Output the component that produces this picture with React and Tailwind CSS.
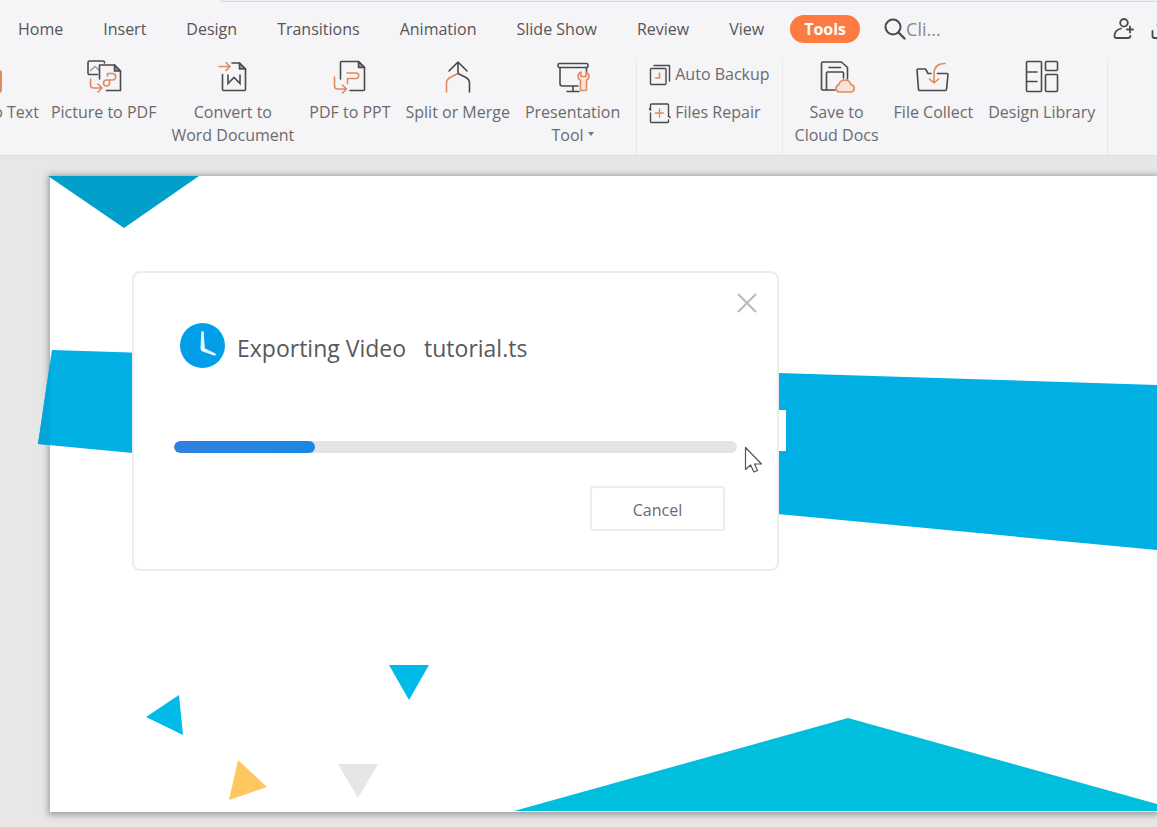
import { useState } from 'react'

const TABS = ['Home', 'Insert', 'Design', 'Transitions', 'Animation', 'Slide Show', 'Review', 'View', 'Tools']

const DARK = '#4a4a4c'
const ORANGE = '#e08a5f'

function Icon({ children, size = 36, className = '' }) {
  return (
    <svg
      width={size}
      height={size}
      viewBox={`0 0 ${size} ${size}`}
      fill="none"
      stroke={DARK}
      strokeWidth="1.6"
      strokeLinecap="round"
      strokeLinejoin="round"
      className={`shrink-0 ${className}`}
      aria-hidden="true"
    >
      {children}
    </svg>
  )
}

const PictureToTextIcon = () => (
  <Icon>
    <path d="M22 4h-17v27h10" />
    <rect x="16" y="12" width="18" height="21" rx="2" stroke={ORANGE} strokeWidth="2" />
  </Icon>
)

const PictureToPdfIcon = () => (
  <Icon>
    <path d="M11.500 15.500H3.500a1.500 1.500 0 0 1-1.500-1.500V3.500A1.500 1.500 0 0 1 3.500 2H17a1.500 1.500 0 0 1 1.500 1.500V4" />
    <path d="M4.500 11.500l4.500-4 4.500 4" stroke="#9a9a9c" />
    <path d="M13.500 20V6h15l6 6v19.500H20.500" />
    <path d="M28.500 6v6h6z" fill="#9a9a9c" />
    <path d="M4.500 20v6a3 3 0 0 0 3 3h8M12 25l4 4-4 4" stroke={ORANGE} />
    <path d="M21.500 17v-2.500h5a3 3 0 0 1 0 6.500h-6a3 3 0 1 0 3 3v-3" stroke={ORANGE} />
  </Icon>
)

const ConvertWordIcon = () => (
  <Icon>
    <path d="M7.500 15.500v15a1 1 0 0 0 1 1h21a1 1 0 0 0 1-1V10l-6-6H17" />
    <path d="M24.500 4v6h6z" fill="#9a9a9c" />
    <path d="M13 16v8.500l6-6 6 6V16" strokeLinejoin="miter" />
    <path d="M4 7.500h11M11 3.500l4 4-4 4" stroke={ORANGE} />
  </Icon>
)

const PdfToPptIcon = () => (
  <Icon>
    <path d="M8.500 20V3.500a1 1 0 0 1 1-1h17l6 6v22a1 1 0 0 1-1 1H18" />
    <path d="M26.500 2.500v6h6z" fill="#9a9a9c" />
    <path d="M2.500 18v9a3 3 0 0 0 3 3h8M10.500 26l4 4-4 4" stroke={ORANGE} />
    <path d="M15 14h10a3 3 0 0 1 0 5.500h-9.500v5" stroke={ORANGE} />
  </Icon>
)

const SplitIcon = () => (
  <Icon>
    <path d="M18 14.500V3M9 12l9-9 9 9" />
    <path d="M18 14.500l-7.500 3.700C7.800 19.500 6.500 21 6.500 24v9" stroke={ORANGE} />
    <path d="M18 14.500l7.500 3.700c2.700 1.300 4 2.800 4 5.800v9" />
  </Icon>
)

const PresentationIcon = () => (
  <Icon>
    <rect x="3" y="4.500" width="30" height="4" rx="1.500" />
    <path d="M5 8.500v16a2.500 2.500 0 0 0 2.500 2.500H23M31.500 8.500V13M18 27v5.500M12 32.500h12" />
    <path
      d="M26 13v4.500h5V13c2 1 3 2.500 3 4.500 0 1.800-1 3-2.500 4v9a1 1 0 0 1-1 1h-4a1 1 0 0 1-1-1v-9c-1.500-1-2.500-2.200-2.500-4 0-2 1-3.500 3-4.500z"
      fill="#fbe6db"
      stroke={ORANGE}
    />
  </Icon>
)

const BackupIcon = () => (
  <Icon size={22}>
    <path d="M5 1.500h15.500V17" strokeWidth="1.400" />
    <rect x="1.500" y="4.500" width="15.500" height="16" rx="1" strokeWidth="1.400" />
    <path d="M10.500 9v5h-4" stroke={ORANGE} />
  </Icon>
)

const RepairIcon = () => (
  <Icon size={22}>
    <path
      d="M1.500 7.500V3a1 1 0 0 1 1-1h16a1 1 0 0 1 1 1v11M1.500 11v8.500a1 1 0 0 0 1 1h16a1 1 0 0 0 1-1V18"
      strokeWidth="1.400"
    />
    <path d="M0 6.500l1.500 1.500M19.500 14l1.500 1.500" />
    <path d="M10.500 7v8M6.500 11h8" stroke={ORANGE} strokeWidth="1.400" />
  </Icon>
)

const SaveCloudIcon = () => (
  <Icon>
    <path d="M16 31H4a1.500 1.500 0 0 1-1.500-1.500v-25A1.500 1.500 0 0 1 4 3h18.500l6 5.500V20" />
    <path d="M7.500 31V14a1 1 0 0 1 1-1h15a1 1 0 0 1 1 1v5M10 8.500h11.500" />
    <path
      d="M20.500 33a3.700 3.700 0 0 1-.6-7.300 6.200 6.200 0 0 1 12-.2 3.800 3.800 0 0 1 .3 7.500z"
      fill="#f9e3d8"
      stroke={ORANGE}
    />
  </Icon>
)

const FileCollectIcon = () => (
  <Icon>
    <path d="M16 14.500h-3L10.500 10H3a1 1 0 0 0-1 1.100l1.500 19.300a1.200 1.200 0 0 0 1.200 1.100h25.600a1.200 1.200 0 0 0 1.200-1.100L33 15.500a1 1 0 0 0-1-1h-9.500" />
    <path d="M30 4.500c-7 0-11 3.500-11 10.500v8.500M14.500 20l4.500 4 4.500-4" stroke={ORANGE} />
  </Icon>
)

const LibraryIcon = () => (
  <Icon>
    <rect x="2.500" y="2.500" width="15" height="30" rx="1" />
    <rect x="21.500" y="2.500" width="12" height="9" rx="1" />
    <rect x="21.500" y="15.500" width="12" height="17" rx="1" />
    <path d="M3 13h10M3 22.500h10" />
  </Icon>
)

const UserPlusIcon = () => (
  <Icon size={22}>
    <circle cx="11" cy="4.800" r="3.800" strokeWidth="1.800" />
    <path
      d="M8 10.500C4 11.500 1.500 14.500 1.500 18v.5A1.500 1.500 0 0 0 3 20h12a2.500 2.500 0 0 0 2.500-2M17 8.500v6M14 11.500h6"
      strokeWidth="1.800"
    />
  </Icon>
)

const TrayIcon = () => (
  <Icon size={22}>
    <path d="M1.500 13v5a2 2 0 0 0 2 2h14a2 2 0 0 0 2-2v-5M10.500 15V3M6.500 7l4-4 4 4" strokeWidth="1.800" />
  </Icon>
)

function RibbonButton({ icon: IconCmp, lines, caret = false }) {
  return (
    <button type="button" className="flex shrink-0 flex-col items-center whitespace-nowrap">
      <IconCmp />
      <span className="mt-1.5 flex flex-col items-center leading-[23px]">
        {lines.map((line, i) => (
          <span key={line} className="flex items-center gap-1">
            {line}
            {caret && i === lines.length - 1 && (
              <svg width="6" height="4" viewBox="0 0 6 4" className="-mt-1" aria-hidden="true">
                <path d="M0 0h6L3 4z" fill="#77777a" />
              </svg>
            )}
          </span>
        ))}
      </span>
    </button>
  )
}

function SmallButton({ icon: IconCmp, label }) {
  return (
    <button type="button" className="flex items-center gap-1 whitespace-nowrap leading-[23px]">
      <IconCmp />
      {label}
    </button>
  )
}

function Divider() {
  return <div className="w-px shrink-0 self-stretch bg-[#e9e8eb]" />
}

function Header() {
  const [tab, setTab] = useState('Tools')

  return (
    <header className="shrink-0 border-b border-[#dcdcdd] bg-[#f5f4f6]">
      <div className="ml-[221px] h-0.5 border-b border-l border-[#d3d7df] bg-[#eef1f6]" />

      {/* Tabs */}
      <div className="flex h-[53px] items-center pl-[18px]">
        <nav className="flex shrink-0 items-center gap-10 text-base text-[#555558]">
          {TABS.map((name) => (
            <button
              key={name}
              type="button"
              onClick={() => setTab(name)}
              className={
                name === tab
                  ? '-mx-3.5 h-7 rounded-full bg-[#ff7a40] px-3.5 font-bold text-white'
                  : 'h-7 whitespace-nowrap'
              }
            >
              {name}
            </button>
          ))}
        </nav>
        <label className="ml-[38px] flex shrink-0 items-center">
          <Icon size={22}>
            <circle cx="9" cy="9" r="7.500" strokeWidth="2" />
            <path d="M14.500 14.500l6 6" strokeWidth="2.400" />
          </Icon>
          <input
            aria-label="Search commands"
            placeholder="Cli..."
            className="w-20 bg-transparent text-lg leading-6 text-[#555558] outline-none placeholder:text-[#88888a]"
          />
        </label>
        <div className="-mr-4 ml-auto flex shrink-0 gap-4">
          <button type="button" aria-label="Invite"><UserPlusIcon /></button>
          <button type="button" aria-label="Share"><TrayIcon /></button>
        </div>
      </div>

      {/* Ribbon */}
      <div className="flex h-[100px] items-start gap-3 pt-1 text-base text-[#6b6b6e]">
        <div className="-ml-[69px] flex gap-3 pr-1">
          <RibbonButton icon={PictureToTextIcon} lines={['Picture to Text']} />
          <div className="flex gap-[15px]">
            <RibbonButton icon={PictureToPdfIcon} lines={['Picture to PDF']} />
            <RibbonButton icon={ConvertWordIcon} lines={['Convert to', 'Word Document']} />
            <RibbonButton icon={PdfToPptIcon} lines={['PDF to PPT']} />
            <RibbonButton icon={SplitIcon} lines={['Split or Merge']} />
            <RibbonButton icon={PresentationIcon} lines={['Presentation', 'Tool']} caret />
          </div>
        </div>
        <Divider />
        <div className="flex shrink-0 flex-col gap-[15px] pt-1">
          <SmallButton icon={BackupIcon} label="Auto Backup" />
          <SmallButton icon={RepairIcon} label="Files Repair" />
        </div>
        <Divider />
        <div className="flex shrink-0 gap-[15px]">
          <RibbonButton icon={SaveCloudIcon} lines={['Save to', 'Cloud Docs']} />
          <RibbonButton icon={FileCollectIcon} lines={['File Collect']} />
          <RibbonButton icon={LibraryIcon} lines={['Design Library']} />
        </div>
        <Divider />
      </div>
    </header>
  )
}

function SlideArt() {
  return (
    <svg
      viewBox="0 0 1107 636"
      preserveAspectRatio="xMinYMin slice"
      className="block h-full w-full overflow-visible"
      aria-hidden="true"
    >
      <path d="M-2 0H149L74 52z" fill="#00a0cb" />
      <path d="M2 174L1107 209V374L-12 268z" fill="#00b0e4" />
      <path d="M2 174L0 186V269L-12 268z" fill="#02a5d7" />
      <path d="M700 234h36v41h-36z" fill="#fff" />
      <path d="M339 489h40l-20 35z" fill="#00bbea" />
      <path d="M96 541l33-22 4 40z" fill="#00bbea" />
      <path d="M188 584l29 27-38 13z" fill="#ffc75f" />
      <path d="M288 588h40l-20 34z" fill="#e6e6e6" />
      <path d="M464 635L798 542L1107 628V635z" fill="#00bfdd" />
    </svg>
  )
}

function ExportDialog({ file, progress }) {
  return (
    <div
      role="dialog"
      aria-label="Exporting Video"
      className="absolute top-[95px] left-[82px] w-[647px] rounded-lg border-2 border-[#eeecef] bg-white px-10 pt-5 pb-[38px]"
    >
      <div className="-mr-5 flex justify-end">
        <button type="button" aria-label="Close">
          <svg width="20" height="20" viewBox="0 0 20 20" stroke="#b9b8bb" strokeWidth="2" aria-hidden="true">
            <path d="M1 1l18 18M19 1L1 19" />
          </svg>
        </button>
      </div>

      <div className="mt-2.5 flex items-center gap-3 pl-1.5">
        <svg width="45" height="45" viewBox="0 0 45 45" aria-hidden="true">
          <circle cx="22.500" cy="22.500" r="22.500" fill="#009fe8" />
          <path
            d="M21.300 9q1.200-2 2.400 0l1.100 16.200 11 5.500q1 2-1.700 1.700L22 28.200q-1.500-.9-1.500-2.700z"
            fill="#e9f8ff"
          />
        </svg>
        <p className="flex gap-[18px] pt-1 text-[23px] leading-8 text-[#59585b]">
          <span>Exporting Video</span>
          <span>{file}</span>
        </p>
      </div>

      <div
        role="progressbar"
        aria-label="Export progress"
        aria-valuenow={progress}
        className="mt-[73px] h-3 overflow-hidden rounded-full bg-[#e4e3e6]"
      >
        <div
          className="h-full rounded-full bg-linear-to-r from-[#3180df] to-[#1788e4]"
          style={{ width: `${progress}%` }}
        />
      </div>

      <div className="mt-[33px] flex justify-end pr-3">
        <button
          type="button"
          className="h-[45px] w-[135px] rounded-[3px] border-2 border-[#eeecef] bg-white pt-0.5 text-base text-[#6b6b6e]"
        >
          Cancel
        </button>
      </div>

      {/* Mouse pointer */}
      <svg width="19" height="28" viewBox="0 0 19 28" className="absolute top-[173px] right-3.5" aria-hidden="true">
        <path
          d="M1.500 1.500V23.500L6.500 19L10 26L13.500 24.500L10.500 18H17.500z"
          fill="#fff"
          stroke="#555"
          strokeWidth="1.200"
          strokeLinejoin="round"
        />
      </svg>
    </div>
  )
}

export default function App() {
  return (
    <div className="flex min-h-screen flex-col overflow-hidden bg-[#e7e7e8] font-['Open_Sans','Noto_Sans',sans-serif]">
      <Header />
      <main className="flex flex-1 flex-col pt-5 pb-[15px] pl-[50px]">
        <div className="relative min-h-[600px] flex-1 bg-white shadow-[0_1px_6px_2px_rgba(90,85,90,0.5)]">
          <div className="absolute inset-0">
            <SlideArt />
          </div>
          <ExportDialog file="tutorial.ts" progress={25} />
        </div>
      </main>
    </div>
  )
}
